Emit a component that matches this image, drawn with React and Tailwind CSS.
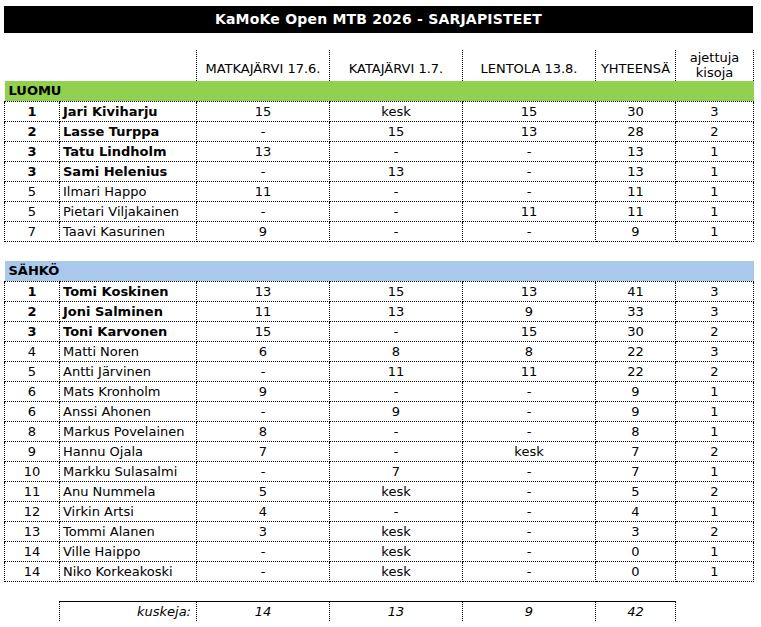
const luomu = [
  ["1", "Jari Kiviharju", "15", "kesk", "15", "30", "3", true],
  ["2", "Lasse Turppa", "-", "15", "13", "28", "2", true],
  ["3", "Tatu Lindholm", "13", "-", "-", "13", "1", true],
  ["3", "Sami Helenius", "-", "13", "-", "13", "1", true],
  ["5", "Ilmari Happo", "11", "-", "-", "11", "1"],
  ["5", "Pietari Viljakainen", "-", "-", "11", "11", "1"],
  ["7", "Taavi Kasurinen", "9", "-", "-", "9", "1"],
];

const sahko = [
  ["1", "Tomi Koskinen", "13", "15", "13", "41", "3", true],
  ["2", "Joni Salminen", "11", "13", "9", "33", "3", true],
  ["3", "Toni Karvonen", "15", "-", "15", "30", "2", true],
  ["4", "Matti Noren", "6", "8", "8", "22", "3"],
  ["5", "Antti Järvinen", "-", "11", "11", "22", "2"],
  ["6", "Mats Kronholm", "9", "-", "-", "9", "1"],
  ["6", "Anssi Ahonen", "-", "9", "-", "9", "1"],
  ["8", "Markus Povelainen", "8", "-", "-", "8", "1"],
  ["9", "Hannu Ojala", "7", "-", "kesk", "7", "2"],
  ["10", "Markku Sulasalmi", "-", "7", "-", "7", "1"],
  ["11", "Anu Nummela", "5", "kesk", "-", "5", "2"],
  ["12", "Virkin Artsi", "4", "-", "-", "4", "1"],
  ["13", "Tommi Alanen", "3", "kesk", "-", "3", "2"],
  ["14", "Ville Haippo", "-", "kesk", "-", "0", "1"],
  ["14", "Niko Korkeakoski", "-", "kesk", "-", "0", "1"],
];

const cell = "border border-dotted border-black p-0";
const head = "border-x border-dotted border-black align-bottom text-center";
const foot = "border-t border-x border-black [border-top-style:solid] [border-left-style:dotted] [border-right-style:dotted] text-center";

function Row({ r }) {
  const [rank, name, a, b, c, total, count, bold] = r;
  return (
    <tr className="h-[20px]">
      <td className={`${cell} text-center ${bold ? "font-bold" : ""}`}>{rank}</td>
      <td className={`${cell} pl-[3px] text-left ${bold ? "font-bold" : ""}`}>{name}</td>
      <td className={`${cell} text-center`}>{a}</td>
      <td className={`${cell} text-center`}>{b}</td>
      <td className={`${cell} text-center`}>{c}</td>
      <td className={`${cell} text-center`}>{total}</td>
      <td className={`${cell} text-center`}>{count}</td>
    </tr>
  );
}

function Section({ title, color }) {
  return (
    <tr className="h-[20px]">
      <td colSpan={7} className={`${color} border-b border-dotted border-black pl-[4px] p-0 font-bold text-left`}>
        {title}
      </td>
    </tr>
  );
}

export default function App() {
  return (
    <div className="bg-white min-h-screen text-black text-[13px] leading-[15px]" style={{ fontFamily: '"DejaVu Sans", Verdana, sans-serif' }}>
      <div className="pt-[6px] pl-[4px]">
        {/* title bar */}
        <div className="w-[749px] h-[27px] bg-black text-white font-bold text-[14px] tracking-[0.2px] flex items-center justify-center">
          KaMoKe Open MTB 2026 - SARJAPISTEET
        </div>

        <table className="mt-[17px] table-fixed border-collapse w-[749px]">
          <colgroup>
            <col className="w-[55px]" />
            <col className="w-[137px]" />
            <col className="w-[133px]" />
            <col className="w-[133px]" />
            <col className="w-[133px]" />
            <col className="w-[80px]" />
            <col className="w-[78px]" />
          </colgroup>
          <tbody>
            <tr className="h-[31px]">
              <td className="p-0"></td>
              <td className="p-0"></td>
              <td className={`${head} pb-[5px]`}>MATKAJÄRVI 17.6.</td>
              <td className={`${head} pb-[5px]`}>KATAJÄRVI 1.7.</td>
              <td className={`${head} pb-[5px]`}>LENTOLA 13.8.</td>
              <td className={`${head} pb-[5px]`}>YHTEENSÄ</td>
              <td className={`${head} pb-[1px]`}>
                ajettuja
                <br />
                kisoja
              </td>
            </tr>
            <Section title="LUOMU" color="bg-[#92d050]" />
            {luomu.map((r, i) => (
              <Row key={"l" + i} r={r} />
            ))}
            <tr className="h-[20px]">
              <td colSpan={7} className="p-0"></td>
            </tr>
            <Section title="SÄHKÖ" color="bg-[#a8c8ec]" />
            {sahko.map((r, i) => (
              <Row key={"s" + i} r={r} />
            ))}
            <tr className="h-[20px]">
              <td colSpan={7} className="p-0"></td>
            </tr>
            {/* totals */}
            <tr className="h-[20px] italic">
              <td className="p-0"></td>
              <td className={`${foot} !text-right pr-[5px]`}>kuskeja:</td>
              <td className={foot}>14</td>
              <td className={foot}>13</td>
              <td className={foot}>9</td>
              <td className={foot}>42</td>
              <td className="p-0"></td>
            </tr>
          </tbody>
        </table>
      </div>
    </div>
  );
}
